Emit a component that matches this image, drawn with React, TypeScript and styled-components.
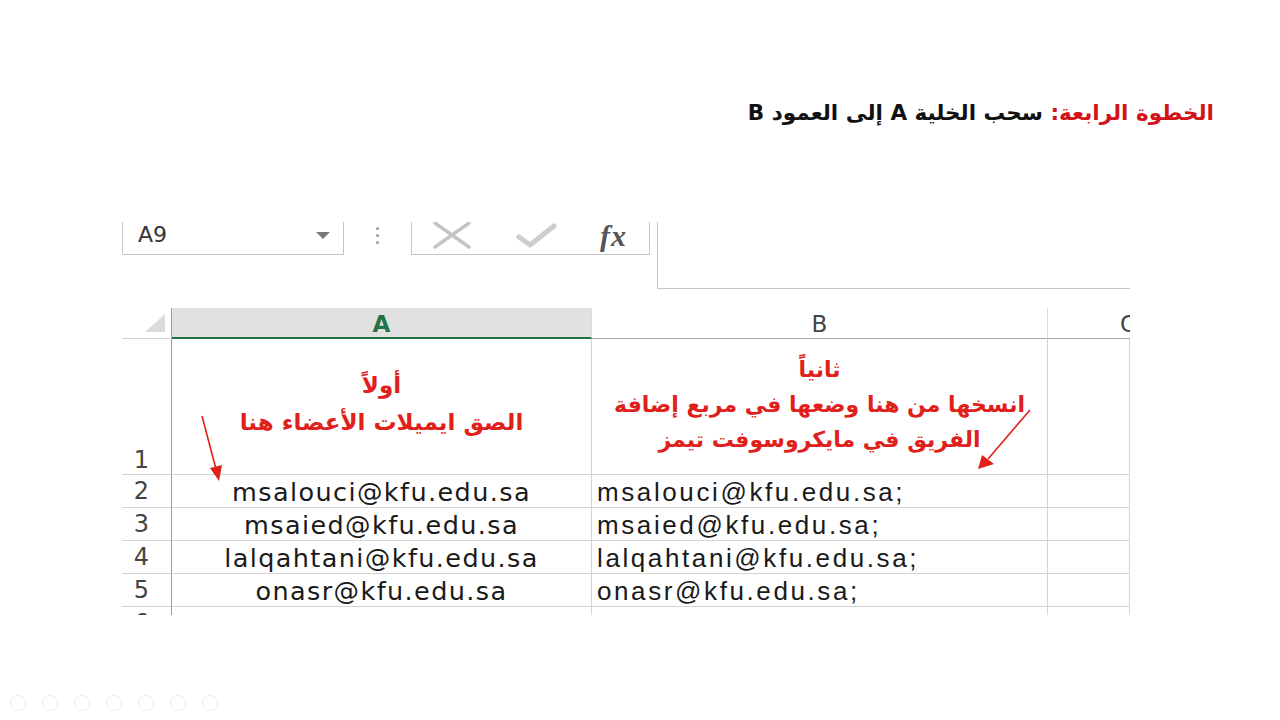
import * as React from 'react'
import styled, { createGlobalStyle } from 'styled-components'

const GlobalStyle = createGlobalStyle`
    html, body {
        margin: 0;
        padding: 0;
        background: #ffffff;
    }
`

const Slide = styled.div`
    width: 1280px;
    height: 720px;
    display: flex;
    flex-direction: column;
    background: #ffffff;
    overflow: hidden;
    font-family: 'DejaVu Sans', 'Noto Sans', sans-serif;
`

const Title = styled.h1`
    direction: rtl;
    text-align: right;
    margin: 0;
    padding: 97px 66px 0 0;
    height: 32px;
    font-family: 'DejaVu Sans', sans-serif;
    font-size: 21.5px;
    font-weight: 700;
    line-height: 32px;
    color: #111;
`

const TitleRed = styled.span`
    color: #d0141a;
`

const Toolbar = styled.div`
    display: flex;
    align-items: flex-start;
    margin: 93px 0 0 122px;
    width: 1008px;
    height: 67px;
`

const NameBox = styled.div`
    box-sizing: border-box;
    width: 222px;
    height: 33px;
    border: 1px solid #c6c6c6;
    border-top: none;
    display: flex;
    align-items: center;
    justify-content: space-between;
    padding: 0 13px 8px 15px;
    font-family: 'DejaVu Sans', sans-serif;
    font-size: 22px;
    color: #333;
`

const DropArrow = styled.span`
    width: 0;
    height: 0;
    border-left: 7px solid transparent;
    border-right: 7px solid transparent;
    border-top: 7px solid #7a7a7a;
    margin-top: 2px;
`

const Dots = styled.div`
    width: 67px;
    height: 33px;
    display: flex;
    flex-direction: column;
    align-items: center;
    justify-content: center;
    gap: 4px;
    padding-bottom: 6px;
    box-sizing: border-box;
    span {
        width: 3px;
        height: 3px;
        border-radius: 50%;
        background: #9a9a9a;
    }
`

const ButtonBox = styled.div`
    box-sizing: border-box;
    width: 239px;
    height: 33px;
    border: 1px solid #c6c6c6;
    border-top: none;
    display: flex;
    align-items: center;
    justify-content: space-between;
    padding: 0 22px 4px 20px;
`

const FxLabel = styled.span`
    font-family: 'Liberation Serif', 'DejaVu Serif', serif;
    font-style: italic;
    font-weight: 700;
    font-size: 30px;
    line-height: 28px;
    color: #555;
    letter-spacing: 1px;
`

const FormulaBar = styled.div`
    flex: 1;
    height: 67px;
    margin-left: 7px;
    border-left: 1px solid #c6c6c6;
    border-bottom: 1px solid #c6c6c6;
    box-sizing: border-box;
`

const Sheet = styled.div`
    margin: 19px 0 0 122px;
    width: 1008px;
    height: 307px;
    overflow: hidden;
    display: grid;
    grid-template-columns: 50px 420px 456px 82px;
    grid-template-rows: 31px 136px repeat(5, 33px);
    font-family: 'DejaVu Sans', sans-serif;
`

const Corner = styled.div`
    position: relative;
    border-bottom: 1px solid #d4d4d4;
    border-right: 1px solid #9e9e9e;
    &::after {
        content: '';
        position: absolute;
        right: 6px;
        bottom: 6px;
        width: 0;
        height: 0;
        border-left: 20px solid transparent;
        border-bottom: 18px solid #dcdcdc;
    }
`

const ColHeader = styled.div<{ $selected?: boolean; $last?: boolean }>`
    display: flex;
    align-items: center;
    justify-content: ${p => (p.$last ? 'flex-end' : 'center')};
    box-sizing: border-box;
    background: ${p => (p.$selected ? '#e1e1e1' : '#ffffff')};
    border-bottom: ${p => (p.$selected ? '2px solid #217346' : '1px solid #ababab')};
    border-right: ${p => (p.$last ? 'none' : '1px solid #dcdcdc')};
    font-size: 23px;
    font-weight: ${p => (p.$selected ? 700 : 400)};
    color: ${p => (p.$selected ? '#217346' : '#444')};
    padding-top: 2px;
    margin-right: ${p => (p.$last ? '-6px' : '0')};
`

const RowHeader = styled.div<{ $tall?: boolean }>`
    display: flex;
    align-items: ${p => (p.$tall ? 'flex-end' : 'center')};
    justify-content: center;
    box-sizing: border-box;
    padding: 0 10px 0 0;
    border-right: 1px solid #9e9e9e;
    border-bottom: 1px solid #d4d4d4;
    font-size: 24px;
    color: #444;
`

const Cell = styled.div<{ $align?: 'left' | 'center' }>`
    position: relative;
    display: flex;
    align-items: center;
    justify-content: ${p => (p.$align === 'left' ? 'flex-start' : 'center')};
    box-sizing: border-box;
    padding-left: ${p => (p.$align === 'left' ? '5px' : '0')};
    padding-top: 2px;
    border-right: 1px solid #d4d4d4;
    border-bottom: 1px solid #d4d4d4;
    font-family: ${p => (p.$align === 'left' ? "'Liberation Sans', Arial, sans-serif" : "'DejaVu Sans', sans-serif")};
    font-size: ${p => (p.$align === 'left' ? '26px' : '25.5px')};
    letter-spacing: ${p => (p.$align === 'left' ? '2.6px' : '1.4px')};
    color: #1a1a1a;
    white-space: nowrap;
`

const NoteCell = styled.div<{ $top: number; $line: number; $size: number }>`
    position: relative;
    direction: rtl;
    display: flex;
    flex-direction: column;
    align-items: center;
    box-sizing: border-box;
    padding-top: ${p => p.$top}px;
    border-right: 1px solid #d4d4d4;
    border-bottom: 1px solid #d4d4d4;
    font-family: 'DejaVu Sans', sans-serif;
    font-weight: 700;
    font-size: ${p => p.$size}px;
    line-height: ${p => p.$line}px;
    color: #e0201b;
`

const Arrow = styled.svg`
    position: absolute;
    overflow: visible;
    z-index: 2;
`

const Footer = styled.div`
    margin-top: auto;
    display: flex;
    gap: 16px;
    padding: 0 0 9px 10px;
    span {
        width: 14px;
        height: 14px;
        border-radius: 50%;
        border: 1px solid #ececec;
    }
`

const emails = ['msalouci', 'msaied', 'lalqahtani', 'onasr']

export default function App() {
    return (
        <Slide>
            <GlobalStyle />
            <Title>
                <TitleRed>الخطوة الرابعة:</TitleRed> سحب الخلية A إلى العمود B
            </Title>

            <Toolbar>
                <NameBox>
                    A9
                    <DropArrow />
                </NameBox>
                <Dots>
                    <span />
                    <span />
                    <span />
                </Dots>
                <ButtonBox>
                    <svg width="40" height="28" viewBox="0 0 40 28">
                        <path d="M3 1 L37 25 M37 1 L3 25" stroke="#c4c4c4" strokeWidth="3.5" strokeLinecap="round" />
                    </svg>
                    <svg width="42" height="28" viewBox="0 0 42 28">
                        <path d="M4 15 L15 23 L39 4" stroke="#cdcdcd" strokeWidth="5" fill="none" strokeLinecap="round" strokeLinejoin="round" />
                    </svg>
                    <FxLabel>fx</FxLabel>
                </ButtonBox>
                <FormulaBar />
            </Toolbar>

            <Sheet>
                <Corner />
                <ColHeader $selected>A</ColHeader>
                <ColHeader>B</ColHeader>
                <ColHeader $last>C</ColHeader>

                <RowHeader $tall>1</RowHeader>
                <NoteCell $top={28} $line={37} $size={23}>
                    <div>أولاً</div>
                    <div>الصق ايميلات الأعضاء هنا</div>
                    <Arrow style={{ left: 28, top: 76 }} width="24" height="66" viewBox="0 0 24 66">
                        <path d="M2 1 L16 54" stroke="#e0201b" strokeWidth="1.6" />
                        <path d="M10 53 L22 50 L19 66 Z" fill="#e0201b" />
                    </Arrow>
                </NoteCell>
                <NoteCell $top={13} $line={35} $size={22}>
                    <div>ثانياً</div>
                    <div>انسخها من هنا وضعها في مربع إضافة</div>
                    <div>الفريق في مايكروسوفت تيمز</div>
                    <Arrow style={{ left: 384, top: 70 }} width="56" height="62" viewBox="0 0 56 62">
                        <path d="M54 1 L12 50" stroke="#e0201b" strokeWidth="1.6" />
                        <path d="M6 46 L18 55 L2 60 Z" fill="#e0201b" />
                    </Arrow>
                </NoteCell>
                <Cell />

                {emails.map((name, i) => (
                    <React.Fragment key={name}>
                        <RowHeader>{i + 2}</RowHeader>
                        <Cell>{name}@kfu.edu.sa</Cell>
                        <Cell $align="left">{name}@kfu.edu.sa;</Cell>
                        <Cell />
                    </React.Fragment>
                ))}

                <RowHeader>6</RowHeader>
                <Cell />
                <Cell />
                <Cell />
            </Sheet>

            <Footer>
                {Array.from({ length: 7 }).map((_, i) => (
                    <span key={i} />
                ))}
            </Footer>
        </Slide>
    )
}
